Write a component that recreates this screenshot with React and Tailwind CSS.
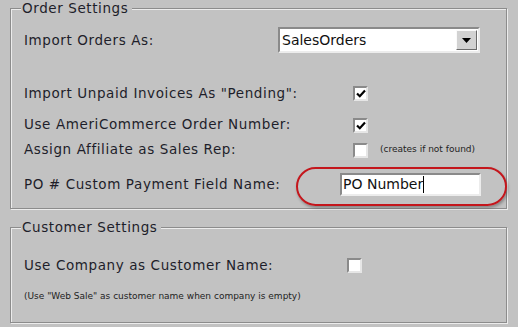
import React from "react";

const Check = () => (
  <svg width="10" height="9" viewBox="0 0 10 9">
    <path d="M1 4.5 L3.8 7.2 L9 1.5" fill="none" stroke="#000" strokeWidth="2.2" />
  </svg>
);

const CheckBox = ({ checked }) => (
  <div className="w-[15px] h-[15px] bg-white border-2 border-[#8a8a8a] border-b-[#e6e6e6] border-r-[#e6e6e6] flex items-center justify-center">
    {checked && <Check />}
  </div>
);

const Group = ({ title, children, className }) => (
  <div
    className={`relative border border-[#8c8c8c] shadow-[inset_1px_1px_0_#ececec,1px_1px_0_#ececec] ${className}`}
  >
    <span className="absolute left-[10px] top-[-9px] bg-[#c2c2c2] pl-[1px] pr-[4px] text-[13.5px] tracking-[0.6px] leading-[16px] text-[#1e1e2a]">
      {title}
    </span>
    {children}
  </div>
);

const Row = ({ label, className, children }) => (
  <div className={`flex items-center ${className}`}>
    <div className="w-[267px] pl-[13px] text-[13.5px] tracking-[0.6px] text-[#1e1e2a] whitespace-nowrap">
      {label}
    </div>
    {children}
  </div>
);

export default function App() {
  return (
    <div
      className="w-[518px] h-[327px] bg-[#c2c2c2] px-[10px] pt-[8px] overflow-hidden"
      style={{ fontFamily: '"DejaVu Sans", Verdana, sans-serif' }}
    >
      <Group title="Order Settings" className="w-[497px] h-[201px] pt-[18px]">
        <Row label="Import Orders As:" className="h-[26px]">
          <div className="w-[202px] h-[26px] bg-white border-2 border-[#8a8a8a] border-b-[#ececec] border-r-[#ececec] flex items-center">
            <span className="flex-1 pl-[2px] text-[14px] text-[#111]">SalesOrders</span>
            <div className="w-[21px] h-[20px] mr-[1px] bg-[#d2d2d2] border border-[#fafafa] border-b-[#6a6a6a] border-r-[#6a6a6a] flex items-center justify-center">
              <svg width="9" height="5" viewBox="0 0 9 5">
                <path d="M0 0 H9 L4.5 5 Z" fill="#000" />
              </svg>
            </div>
          </div>
        </Row>

        <Row label={'Import Unpaid Invoices As "Pending":'} className="h-[16px] mt-[32px]">
          <div className="ml-[75px]">
            <CheckBox checked />
          </div>
        </Row>

        <Row label="Use AmeriCommerce Order Number:" className="h-[16px] mt-[15px]">
          <div className="ml-[75px] mt-[3px]">
            <CheckBox checked />
          </div>
        </Row>

        <Row label="Assign Affiliate as Sales Rep:" className="h-[16px] mt-[9px]">
          <div className="ml-[75px] mt-[2px] flex items-center">
            <CheckBox />
            <span className="ml-[12px] text-[9px] text-[#222]">(creates if not found)</span>
          </div>
        </Row>

        <Row label="PO # Custom Payment Field Name:" className="h-[22px] mt-[16px]">
          <div className="ml-[62px] w-[141px] h-[23px] bg-white border-2 border-[#8a8a8a] border-b-[#ececec] border-r-[#ececec] flex items-center pl-[1px]">
            <span className="text-[14px] text-[#111]">PO Number</span>
            <span className="w-px h-[17px] bg-black" />
          </div>
        </Row>

        <div className="absolute left-[285px] top-[158px] w-[211px] h-[39px] rounded-full border-2 border-[#c4161c] shadow-[1px_2px_3px_rgba(0,0,0,0.3)]" />
      </Group>

      <Group title="Customer Settings" className="w-[497px] h-[96px] mt-[18px] pt-[29px]">
        <Row label="Use Company as Customer Name:" className="h-[16px]">
          <div className="ml-[69px]">
            <CheckBox />
          </div>
        </Row>
        <div className="pl-[13px] mt-[17px] text-[9px] text-[#222] whitespace-nowrap">
          (Use "Web Sale" as customer name when company is empty)
        </div>
      </Group>
    </div>
  );
}
